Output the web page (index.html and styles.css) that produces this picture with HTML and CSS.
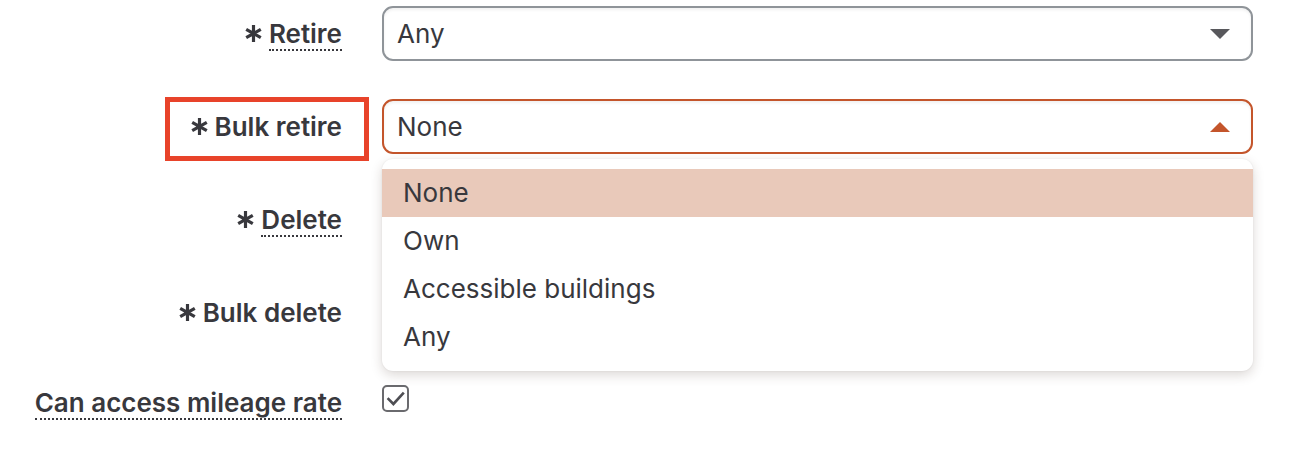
FILE: index.html
```html
<!DOCTYPE html>
<html lang="en">
<head>
<meta charset="utf-8">
<title>Permissions</title>
<link rel="stylesheet" href="styles.css">
</head>
<body>
<form class="form">
  <div class="row">
    <div class="label">
      <svg class="req" viewBox="0 0 18 18" aria-hidden="true"><path d="M9 1v16M2.1 5l13.8 8M2.1 13l13.8-8"/></svg>
      <span class="hint">Retire</span>
    </div>
    <div class="select"><span class="value">Any</span><span class="caret down"></span></div>
  </div>

  <div class="row">
    <div class="label highlighted">
      <svg class="req" viewBox="0 0 18 18" aria-hidden="true"><path d="M9 1v16M2.1 5l13.8 8M2.1 13l13.8-8"/></svg>
      <span>Bulk retire</span>
    </div>
    <div class="select-wrap">
      <div class="select open"><span class="value">None</span><span class="caret up"></span></div>
      <ul class="menu">
        <li class="active">None</li>
        <li>Own</li>
        <li>Accessible buildings</li>
        <li>Any</li>
      </ul>
    </div>
  </div>

  <div class="row">
    <div class="label">
      <svg class="req" viewBox="0 0 18 18" aria-hidden="true"><path d="M9 1v16M2.1 5l13.8 8M2.1 13l13.8-8"/></svg>
      <span class="hint">Delete</span>
    </div>
    <div class="select"><span class="value">Any</span><span class="caret down"></span></div>
  </div>

  <div class="row">
    <div class="label">
      <svg class="req" viewBox="0 0 18 18" aria-hidden="true"><path d="M9 1v16M2.1 5l13.8 8M2.1 13l13.8-8"/></svg>
      <span>Bulk delete</span>
    </div>
    <div class="select"><span class="value">None</span><span class="caret down"></span></div>
  </div>

  <div class="row row-check">
    <div class="label label-check">
      <span class="hint">Can access mileage rate</span>
    </div>
    <div class="checkbox">
      <svg viewBox="0 0 23 23" aria-hidden="true"><path d="M3.6 11.2l5.8 5.8L19.8 5.6"/></svg>
    </div>
  </div>
</form>
</body>
</html>
```

FILE: styles.css
```css
* { box-sizing: border-box; }

html, body {
  margin: 0;
  padding: 0;
  background: #ffffff;
}

body {
  font-family: Inter, Roboto, "Liberation Sans", sans-serif;
  color: #38383d;
}

.form {
  padding-top: 6px;
  display: flex;
  flex-direction: column;
  gap: 38px;
}

.row {
  display: grid;
  grid-template-columns: 342px 871px;
  column-gap: 40px;
  align-items: center;
}

.label {
  justify-self: end;
  display: flex;
  align-items: center;
  gap: 6px;
  font-size: 26px;
  font-weight: 600;
  line-height: 36px;
  position: relative;
}

.req {
  width: 19px;
  height: 19px;
  stroke: #38383d;
  stroke-width: 3;
  fill: none;
  flex: none;
}

.hint {
  border-bottom: 2px dotted #38383d;
  line-height: 30px;
  padding-top: 2px;
}

.highlighted::after {
  content: "";
  position: absolute;
  left: -25px;
  right: -27px;
  top: -12px;
  bottom: -16px;
  border: 5px solid #e8432a;
  pointer-events: none;
}

.select-wrap {
  position: relative;
}

.select {
  height: 55px;
  border: 2px solid #8f9499;
  border-radius: 11px;
  display: flex;
  align-items: center;
  justify-content: space-between;
  padding: 0 21px 0 13px;
  font-size: 26px;
  background: #fff;
  box-shadow: inset 0 2px 3px rgba(0, 0, 0, 0.06);
}

.select.open {
  border-color: #c4552b;
}

.caret {
  width: 0;
  height: 0;
  border-left: 10px solid transparent;
  border-right: 10px solid transparent;
}

.caret.down {
  border-top: 10px solid #58585c;
}

.caret.up {
  border-bottom: 10px solid #c4552b;
}

.menu {
  position: absolute;
  left: 0;
  right: 0;
  top: 60px;
  margin: 0;
  padding: 10px 0;
  list-style: none;
  background: #fff;
  border-radius: 11px;
  box-shadow: 0 4px 12px rgba(60, 40, 30, 0.18), 0 0 2px rgba(0, 0, 0, 0.08);
  z-index: 5;
}

.menu li {
  height: 48px;
  line-height: 48px;
  padding: 0 21px;
  font-size: 26px;
}

.menu li.active {
  background: #e9c9ba;
}

.row-check {
  align-items: start;
}

.label-check {
  padding-top: 8px;
}

.checkbox {
  width: 27px;
  height: 27px;
  margin-top: 7px;
  border: 2px solid #6a6a6e;
  border-radius: 5px;
}

.checkbox svg {
  display: block;
  width: 23px;
  height: 23px;
  fill: none;
  stroke: #4e4e53;
  stroke-width: 2.6;
}
```
